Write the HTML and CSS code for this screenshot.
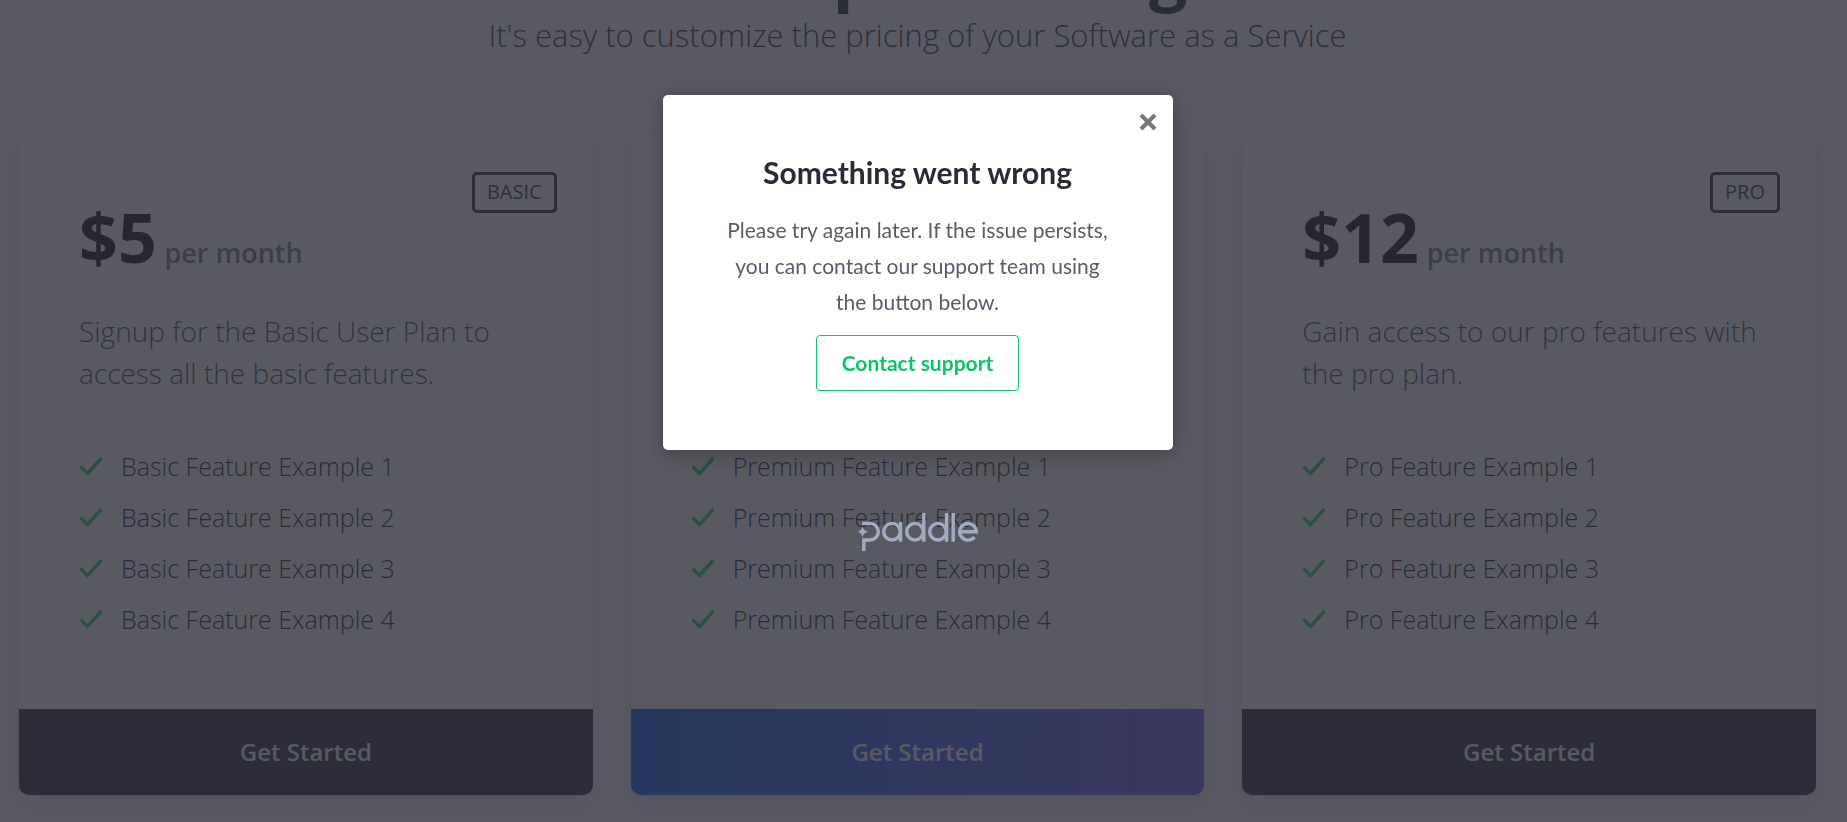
FILE: index.html
```html
<!DOCTYPE html>
<html lang="en">
<head>
<meta charset="utf-8">
<title>Example Pricing</title>
<link rel="stylesheet" href="styles.css">
</head>
<body>
<svg class="defs" aria-hidden="true">
  <symbol id="check" viewBox="0 0 24 24"><path d="M1.500 12.500L8.500 19.500L22.500 4" fill="none" stroke="currentColor" stroke-width="3.400"/></symbol>
</svg>
<main class="page">
  <header class="intro">
    <h1 class="intro-title">Example Pricing</h1>
    <p class="intro-text">It's easy to customize the pricing of your Software as a Service</p>
  </header>
  <section class="plans">
    <article class="plan">
      <div class="plan-body">
        <span class="badge">BASIC</span>
        <p class="price">$5 <span class="period">per month</span></p>
        <p class="summary">Signup for the Basic User Plan to access all the basic features.</p>
        <ul class="features">
          <li><svg class="check"><use href="#check"/></svg>Basic Feature Example 1</li>
          <li><svg class="check"><use href="#check"/></svg>Basic Feature Example 2</li>
          <li><svg class="check"><use href="#check"/></svg>Basic Feature Example 3</li>
          <li><svg class="check"><use href="#check"/></svg>Basic Feature Example 4</li>
        </ul>
      </div>
      <button class="start" type="button">Get Started</button>
    </article>
    <article class="plan plan-featured">
      <div class="plan-body">
        <ul class="features">
          <li><svg class="check"><use href="#check"/></svg>Premium Feature Example 1</li>
          <li><svg class="check"><use href="#check"/></svg>Premium Feature Example 2</li>
          <li><svg class="check"><use href="#check"/></svg>Premium Feature Example 3</li>
          <li><svg class="check"><use href="#check"/></svg>Premium Feature Example 4</li>
        </ul>
      </div>
      <button class="start start-featured" type="button">Get Started</button>
    </article>
    <article class="plan">
      <div class="plan-body">
        <span class="badge">PRO</span>
        <p class="price">$12 <span class="period">per month</span></p>
        <p class="summary">Gain access to our pro features with the pro plan.</p>
        <ul class="features">
          <li><svg class="check"><use href="#check"/></svg>Pro Feature Example 1</li>
          <li><svg class="check"><use href="#check"/></svg>Pro Feature Example 2</li>
          <li><svg class="check"><use href="#check"/></svg>Pro Feature Example 3</li>
          <li><svg class="check"><use href="#check"/></svg>Pro Feature Example 4</li>
        </ul>
      </div>
      <button class="start" type="button">Get Started</button>
    </article>
  </section>
</main>
<div class="overlay">
  <div class="dialog" role="dialog" aria-labelledby="dialog-title">
    <button class="close" type="button" aria-label="Close"><svg viewBox="0 0 18 18"><path d="M2 2L16 16M16 2L2 16" stroke="currentColor" stroke-width="4"/></svg></button>
    <h2 class="dialog-title" id="dialog-title">Something went wrong</h2>
    <p class="dialog-text">Please try again later. If the issue persists, you can contact our support team using the button below.</p>
    <button class="support" type="button">Contact support</button>
  </div>
  <svg class="logo" viewBox="1 0 122 40" role="img" aria-label="paddle">
    <g fill="none" stroke="currentColor" stroke-width="3.4">
      <path d="M6 11.400H14A8.300 8.300 0 0 1 14 28H7.800V39"/>
      <circle cx="36" cy="19.700" r="8.300"/><path d="M44.500 10V29.700"/>
      <circle cx="59" cy="19.700" r="8.300"/><path d="M67.800 1V29.700"/>
      <circle cx="82" cy="19.700" r="8.300"/><path d="M90.600 1V29.700M97.200 1V29.700"/>
      <path d="M104 19.700H120.300A8.300 8.300 0 1 0 118.500 25"/>
    </g>
    <path fill="currentColor" d="M6.500 14.500Q7.500 18.700 12 19.700Q7.500 20.700 6.500 25Q5.500 20.700 1.500 19.700Q5.500 18.700 6.500 14.500Z"/>
  </svg>
</div>
</body>
</html>
```
FILE: styles.css
```css
* { box-sizing: border-box; }
body {
  margin: 0;
  overflow: hidden;
  background: #fff;
  font-family: "Open Sans", "Noto Sans", sans-serif;
}
h1, h2, p, ul { margin: 0; padding: 0; }
ul { list-style: none; }
button { font: inherit; cursor: pointer; }
.defs { position: absolute; width: 0; height: 0; }
.page { padding: 0 31px 27px 19px; }
.intro { text-align: center; margin-top: -70px; }
.intro-title {
  color: #161e2e;
  font-size: 68px;
  font-weight: 700;
  line-height: 84px;
}
.intro-text {
  color: #252a40;
  font-size: 31px;
  font-weight: 300;
  line-height: 43px;
}
.plans {
  display: grid;
  grid-template-columns: repeat(3, 1fr);
  gap: 38px;
  margin-top: 72px;
}
.plan {
  display: flex;
  flex-direction: column;
  overflow: hidden;
  border-radius: 10px;
  background: #fff;
  box-shadow: 0 0 0 1px rgba(0, 0, 0, .05), 0 12px 30px rgba(0, 0, 0, .12);
}
.plan-body {
  position: relative;
  flex: 1;
  padding: 66px 48px 65px 60px;
}
.plan-featured .plan-body {
  display: flex;
  flex-direction: column;
  justify-content: flex-end;
}
.badge {
  position: absolute;
  top: 43px;
  right: 36px;
  padding: 0 12px 2px;
  border: 3px solid #202033;
  border-radius: 5px;
  color: #252f3f;
  font-size: 20px;
  line-height: 33px;
}
.price {
  color: #000;
  font-size: 68px;
  font-weight: 700;
  line-height: 84px;
  white-space: nowrap;
}
.period {
  margin-left: -10px;
  color: #6b7280;
  font-size: 27px;
  font-weight: 600;
  line-height: 1;
}
.summary {
  margin-top: 31px;
  color: #3c4258;
  font-size: 28px;
  font-weight: 300;
  line-height: 42px;
}
.features { margin-top: 46px; }
.features li {
  display: flex;
  align-items: center;
  gap: 18px;
  height: 51px;
  color: #10141f;
  font-size: 25px;
  font-weight: 300;
}
.check { width: 24px; height: 24px; color: #1ec86e; }
.start {
  height: 86px;
  padding: 0 0 2px;
  border: 0;
  background: #202536;
  color: #fff;
  font-size: 24px;
  font-weight: 600;
}
.start-featured { background: linear-gradient(90deg, #005cf0, #6458e8); }
.overlay {
  position: fixed;
  inset: 0;
  display: flex;
  flex-direction: column;
  align-items: center;
  padding: 95px 12px 0 0;
  background: rgba(47, 47, 59, .8);
  font-family: Lato, sans-serif;
}
.dialog {
  position: relative;
  width: 510px;
  padding: 58px 60px 59px;
  border-radius: 5px;
  background: #fff;
  box-shadow: 0 4px 20px rgba(0, 0, 0, .28);
  text-align: center;
}
.close {
  position: absolute;
  top: 18px;
  right: 16px;
  display: flex;
  padding: 0;
  border: 0;
  background: none;
  color: #777;
}
.close svg { width: 18px; height: 18px; }
.dialog-title {
  color: #2b2b38;
  font-size: 30px;
  font-weight: 700;
  line-height: 38px;
}
.dialog-text {
  margin-top: 21px;
  color: #5b5b6b;
  font-size: 21px;
  line-height: 36px;
}
.support {
  height: 56px;
  margin-top: 15px;
  padding: 0 25px 2px;
  border: 1px solid #0cc568;
  border-radius: 4px;
  background: #fff;
  color: #0cc568;
  font-size: 21px;
  font-weight: 700;
}
.logo {
  width: 122px;
  height: 40px;
  margin-top: 62px;
  color: #a1abc2;
}
```
